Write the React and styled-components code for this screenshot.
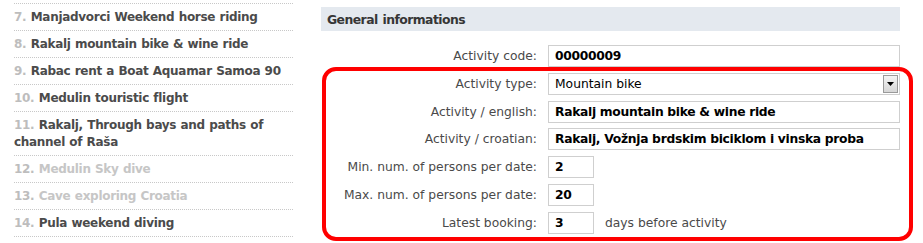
import React from "react";
import styled, { createGlobalStyle } from "styled-components";

const Global = createGlobalStyle`
  html, body { margin: 0; padding: 0; background: #fff; }
  body { font-family: "DejaVu Sans", Verdana, sans-serif; }
`;

const Page = styled.div`
  position: relative;
  width: 923px;
  height: 243px;
  overflow: hidden;
  display: flex;
  align-items: flex-start;
  background: #fff;
`;

const Sidebar = styled.ul`
  list-style: none;
  margin: 3px 0 0 14px;
  padding: 0;
  width: 279px;
  border-top: 1px dotted #c8c8c8;
  flex: none;
`;

const Item = styled.li`
  padding: 5px 0 4px;
  border-bottom: 1px dotted #c8c8c8;
  font-size: 12px;
  line-height: 17px;
  font-weight: bold;
  letter-spacing: -0.3px;
  word-spacing: 0.5px;
  color: ${(p) => (p.$disabled ? "#c6c6c6" : "#4b4b4b")};
`;

const Num = styled.span`
  color: #bdbdbd;
  font-weight: bold;
`;

const Main = styled.div`
  margin-left: 28px;
  margin-top: 7px;
  width: 579px;
  flex: none;
`;

const Header = styled.div`
  height: 24px;
  background: #e4e9ef;
  padding-left: 6px;
  padding-top: 1px;
  box-sizing: border-box;
  display: flex;
  align-items: center;
  font-size: 12.4px;
  font-weight: bold;
  letter-spacing: -0.55px;
  word-spacing: 1px;
  color: #363636;
`;

const Form = styled.div`
  margin-top: 14px;
  display: flex;
  flex-direction: column;
  gap: 5.8px;
`;

const Row = styled.div`
  display: flex;
  align-items: center;
  height: 22px;
`;

const Label = styled.div`
  width: 216px;
  flex: none;
  text-align: right;
  font-size: 12.3px;
  color: #4a4a4a;
  margin-right: 11px;
  white-space: nowrap;
`;

const Field = styled.div`
  box-sizing: border-box;
  height: 22px;
  width: ${(p) => (p.$small ? "46px" : "352px")};
  border: 1px solid #cfcfcf;
  background: #fff;
  display: flex;
  align-items: center;
  padding-left: 6px;
  font-size: 12.3px;
  font-weight: ${(p) => (p.$plain ? "normal" : "bold")};
  letter-spacing: ${(p) => (p.$plain ? "0" : "-0.3px")};
  color: #000;
  white-space: nowrap;
  position: relative;
`;

const DropButton = styled.div`
  position: absolute;
  right: 1px;
  top: 1px;
  width: 15px;
  height: 18px;
  box-sizing: border-box;
  border: 1px solid #9a9a9a;
  background: linear-gradient(#f4f4f4, #d6d6d6);
  display: flex;
  align-items: center;
  justify-content: center;
`;

const Suffix = styled.span`
  margin-left: 11px;
  font-size: 12.3px;
  color: #4a4a4a;
`;

const Highlight = styled.div`
  position: absolute;
  left: 322px;
  top: 67px;
  width: 591px;
  height: 174px;
  box-sizing: border-box;
  border: 4px solid #f00;
  border-radius: 14px;
  pointer-events: none;
`;

const items = [
  { n: 7, t: "Manjadvorci Weekend horse riding" },
  { n: 8, t: "Rakalj mountain bike & wine ride" },
  { n: 9, t: "Rabac rent a Boat Aquamar Samoa 90" },
  { n: 10, t: "Medulin touristic flight" },
  { n: 11, t: "Rakalj, Through bays and paths of channel of Raša" },
  { n: 12, t: "Medulin Sky dive", d: true },
  { n: 13, t: "Cave exploring Croatia", d: true },
  { n: 14, t: "Pula weekend diving" },
];

export default function App() {
  return (
    <>
      <Global />
      <Page>
        <Sidebar>
          {items.map((it) => (
            <Item key={it.n} $disabled={it.d}>
              <Num>{it.n}.</Num> {it.t}
            </Item>
          ))}
        </Sidebar>
        <Main>
          <Header>General informations</Header>
          <Form>
            <Row>
              <Label>Activity code:</Label>
              <Field>00000009</Field>
            </Row>
            <Row>
              <Label>Activity type:</Label>
              <Field $plain>
                Mountain bike
                <DropButton>
                  <svg width="7" height="4" viewBox="0 0 7 4">
                    <path d="M0 0H7L3.5 4Z" fill="#000" />
                  </svg>
                </DropButton>
              </Field>
            </Row>
            <Row>
              <Label>Activity / english:</Label>
              <Field>Rakalj mountain bike &amp; wine ride</Field>
            </Row>
            <Row>
              <Label>Activity / croatian:</Label>
              <Field>Rakalj, Vožnja brdskim biciklom i vinska proba</Field>
            </Row>
            <Row>
              <Label>Min. num. of persons per date:</Label>
              <Field $small>2</Field>
            </Row>
            <Row>
              <Label>Max. num. of persons per date:</Label>
              <Field $small>20</Field>
            </Row>
            <Row>
              <Label>Latest booking:</Label>
              <Field $small>3</Field>
              <Suffix>days before activity</Suffix>
            </Row>
          </Form>
        </Main>
        <Highlight />
      </Page>
    </>
  );
}
